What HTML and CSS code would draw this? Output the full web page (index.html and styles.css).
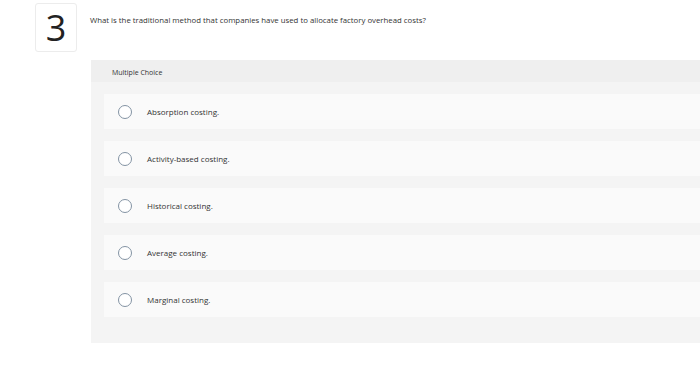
FILE: index.html
```html
<!DOCTYPE html>
<html lang="en">
<head>
    <meta charset="UTF-8">
    <meta name="viewport" content="width=device-width, initial-scale=1.0">
    <title>Question 3</title>
    <link rel="stylesheet" href="styles.css">
</head>
<body>

<div class="question">
    <div class="numero">3</div>
    <p class="enunciado">What is the traditional method that companies have used to allocate factory overhead costs?</p>
</div>

<div class="painel">
    <div class="cabecalho">Multiple Choice</div>
    <div class="opcoes">
        <div class="opcao"><span class="radio"></span><span class="texto">Absorption costing.</span></div>
        <div class="opcao"><span class="radio"></span><span class="texto">Activity-based costing.</span></div>
        <div class="opcao"><span class="radio"></span><span class="texto">Historical costing.</span></div>
        <div class="opcao"><span class="radio"></span><span class="texto">Average costing.</span></div>
        <div class="opcao"><span class="radio"></span><span class="texto">Marginal costing.</span></div>
    </div>
</div>

</body>
</html>
```

FILE: styles.css
```css
body {
    font-family: "Open Sans", sans-serif;
    margin: 0;
    background-color: #ffffff;
    color: #333333;
}
.question {
    display: flex;
    padding: 3px 0 0 35px;
}
.numero {
    width: 40px;
    height: 47px;
    border: 1px solid #ececec;
    border-radius: 3px;
    display: flex;
    align-items: center;
    justify-content: center;
    font-size: 36px;
    font-weight: 400;
    color: #222222;
}
.enunciado {
    margin: 12px 0 0 13px;
    font-size: 7.8px;
}
.painel {
    margin: 8px 0 0 91px;
    height: 283px;
    background-color: #f4f4f4;
}
.cabecalho {
    height: 22px;
    line-height: 26px;
    padding-left: 21px;
    background-color: #efefef;
    font-size: 7px;
    color: #333333;
}
.opcoes {
    display: flex;
    flex-direction: column;
    gap: 12px;
    padding: 12px 0 0 13px;
}
.opcao {
    height: 35px;
    display: flex;
    align-items: center;
    background-color: #fafafa;
}
.radio {
    width: 12px;
    height: 12px;
    border: 1.5px solid #8393a3;
    border-radius: 50%;
    margin-left: 14px;
    background-color: #ffffff;
}
.texto {
    margin-left: 15px;
    font-size: 8px;
}
```
